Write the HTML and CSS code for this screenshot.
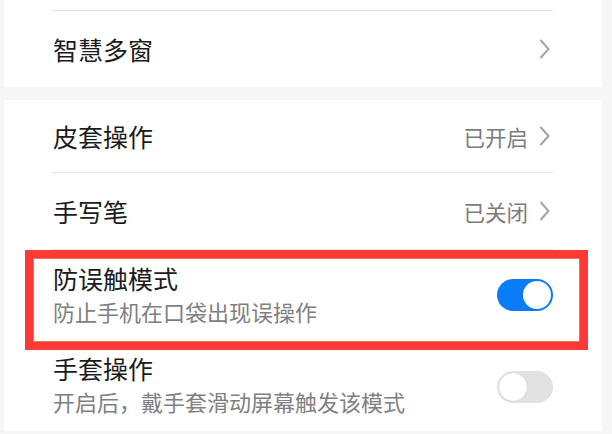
FILE: index.html
```html
<!DOCTYPE html>
<html lang="zh-CN">
<head>
    <meta charset="UTF-8">
    <meta name="viewport" content="width=device-width, initial-scale=1.0">
    <title>智能辅助</title>
    <link rel="stylesheet" href="styles.css">
</head>
<body>

<div class="page">
    <!-- 第一组 -->
    <div class="group">
        <div class="row row-top"></div>
        <div class="row row-link">
            <span class="title">智慧多窗</span>
            <span class="right">
                <svg class="chevron" viewBox="0 0 11 20"><polyline points="1.5,1 9.5,10 1.5,19"/></svg>
            </span>
        </div>
    </div>

    <!-- 第二组 -->
    <div class="group">
        <div class="row row-link">
            <span class="title">皮套操作</span>
            <span class="right">
                <span class="status">已开启</span>
                <svg class="chevron" viewBox="0 0 11 20"><polyline points="1.5,1 9.5,10 1.5,19"/></svg>
            </span>
        </div>
        <div class="row row-link">
            <span class="title">手写笔</span>
            <span class="right">
                <span class="status">已关闭</span>
                <svg class="chevron" viewBox="0 0 11 20"><polyline points="1.5,1 9.5,10 1.5,19"/></svg>
            </span>
        </div>
        <div class="row row-switch marked">
            <div class="text">
                <div class="title">防误触模式</div>
                <div class="sub">防止手机在口袋出现误操作</div>
            </div>
            <span class="switch on"></span>
            <div class="mark"></div>
        </div>
        <div class="row row-switch last">
            <div class="text">
                <div class="title">手套操作</div>
                <div class="sub">开启后，戴手套滑动屏幕触发该模式</div>
            </div>
            <span class="switch"></span>
        </div>
    </div>
</div>

</body>
</html>
```

FILE: styles.css
```css
body {
    margin: 0;
    background-color: #f6f6f6;
    font-family: "Noto Sans CJK SC", "Noto Sans", sans-serif;
}
.page {
    width: 598px;
    margin-left: 4px;
}
.group {
    background-color: #fff;
    margin-bottom: 13px;
}
.row {
    position: relative;
    display: flex;
    align-items: center;
    justify-content: space-between;
    margin: 0 49px 0 48px;
    padding-left: 1px;
    border-bottom: 1px solid #e6e6e6;
}
.row-top {
    height: 10px;
}
.row-link {
    height: 76px;
}
.group:first-child .row-link {
    border-bottom: none;
}
.group:last-child .row-link:first-child {
    height: 72px;
}
.row-switch {
    height: 100px;
    border-bottom: none;
}
.row-switch.last {
    height: 81px;
    align-items: flex-start;
}
.row-switch.last .text {
    padding-top: 2px;
}
.row-switch.last .switch {
    margin-top: 21px;
}
.title {
    font-size: 25px;
    line-height: 32px;
    color: #1b1b1b;
}
.sub {
    font-size: 22px;
    line-height: 30px;
    margin-top: 2px;
    color: #7f7f7f;
}
.right {
    display: flex;
    align-items: center;
}
.status {
    font-size: 21.5px;
    color: #7c7c7c;
    margin-right: 11px;
}
.chevron {
    width: 11px;
    height: 20px;
    margin-right: 3px;
    fill: none;
    stroke: #a3a3a3;
    stroke-width: 2;
}
.switch {
    position: relative;
    width: 56px;
    height: 32px;
    border-radius: 16px;
    background-color: #e2e2e2;
}
.switch::after {
    content: "";
    position: absolute;
    top: 2px;
    left: 2px;
    width: 28px;
    height: 28px;
    border-radius: 50%;
    background-color: #fff;
    box-shadow: 0 0 1px rgba(0, 0, 0, 0.25);
}
.switch.on {
    background-color: #0a7cf5;
    margin-top: -10px;
}
.switch.on::after {
    left: 26px;
    box-shadow: none;
}
.marked .text {
    margin-top: -12px;
}
.mark {
    position: absolute;
    left: -27px;
    right: -35px;
    top: 0;
    bottom: 0;
    border: 8px solid #fb3a38;
    box-shadow: inset 0 0 0 1px #f27048;
}
```
